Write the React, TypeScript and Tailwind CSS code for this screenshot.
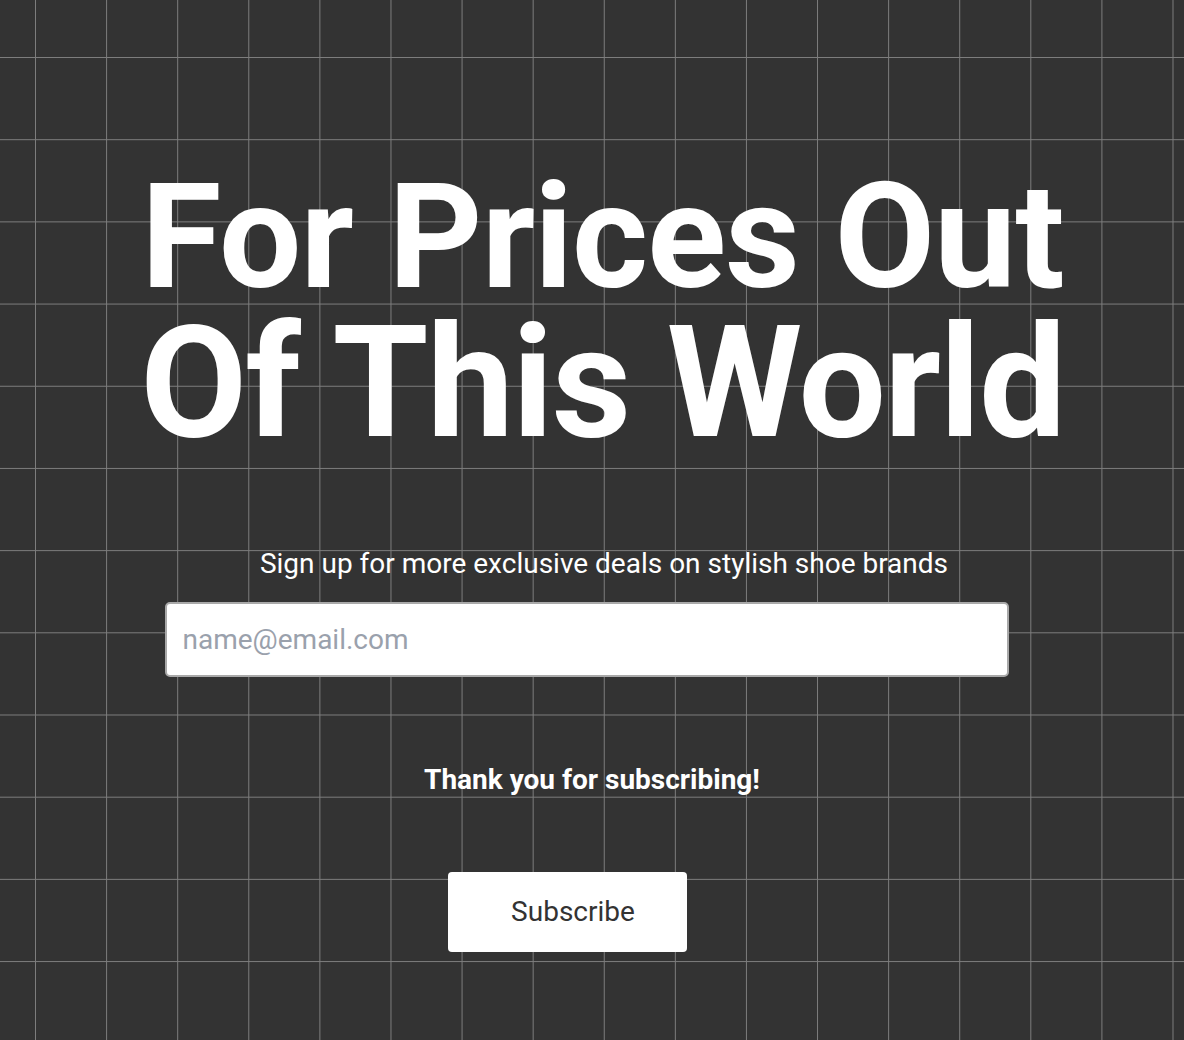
import React from 'react';

export default function App() {
  return (
    <div className="min-h-[1040px] w-full overflow-hidden bg-[#333333] bg-[linear-gradient(to_right,#7d7d7d_1px,transparent_1px),linear-gradient(to_bottom,#7d7d7d_1px,transparent_1px)] bg-[size:71.1px_82.2px] bg-[position:35px_57px] font-['Roboto',_'Liberation_Sans',_sans-serif] text-white">
      <div className="flex flex-col items-center pt-[165px]">
        <h1 className="flex flex-col items-center pl-[21px] font-bold leading-none">
          <span className="text-[146px] leading-[146px] tracking-[-0.9px]">For Prices Out</span>
          <span className="text-[155px] leading-[145px] tracking-[-1.55px]">Of This World</span>
        </h1>

        <p className="mt-[92px] pl-[24px] text-[28px] leading-[32px]">Sign up for more exclusive deals on stylish shoe brands</p>

        <input
          type="email"
          placeholder="name@email.com"
          className="mt-[22px] mr-[11px] h-[75px] w-[844px] rounded-[5px] border-2 border-[#a9a9a9] bg-white px-[16px] text-[28px] text-[#333] outline-none placeholder:text-[#9aa1ac]"
        />

        <p className="mt-[86px] text-[28px] font-bold leading-[34px]">Thank you for subscribing!</p>

        <button className="mt-[75px] mr-[50px] h-[80px] w-[239px] rounded-[4px] bg-white pl-[12px] text-[28px] text-[#333]">
          Subscribe
        </button>
      </div>
    </div>
  );
}
